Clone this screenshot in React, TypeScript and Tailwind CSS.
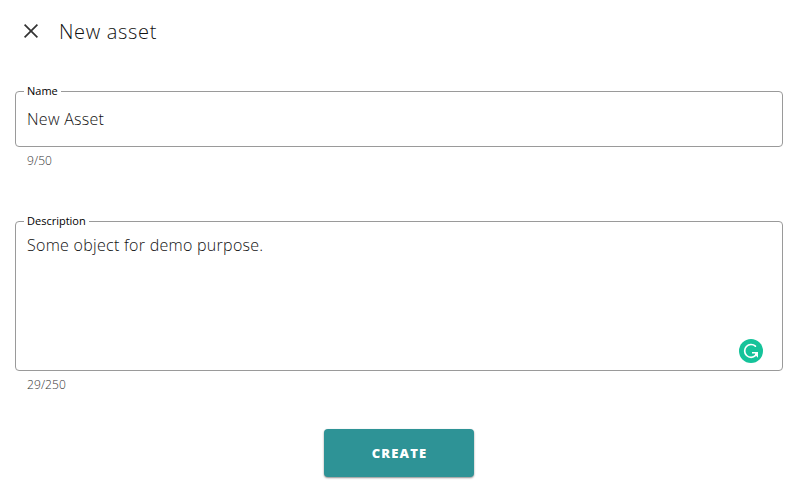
import { useState } from "react";

function CloseIcon() {
  return (
    <svg width="24" height="24" viewBox="0 0 24 24" fill="none" stroke="#333333" strokeWidth="1.7">
      <path d="M5.6 5.6 18.4 18.4M18.4 5.6 5.6 18.4" />
    </svg>
  );
}

function AssistantBadge() {
  return (
    <svg className="absolute right-[19px] bottom-0" width="24" height="24" viewBox="0 0 24 24">
      <circle cx="12" cy="12" r="12" fill="#15c39a" />
      <path d="M16.4 7.2A6.4 6.4 0 1 0 16.6 16.4" fill="none" stroke="#fff" strokeWidth="1.7" strokeLinecap="round" />
      <path d="M13 13H19V18.8L17 16.8 15.8 16.2 16.2 14.6H13Z" fill="#fff" />
    </svg>
  );
}

const fieldText =
  "block w-full resize-none bg-transparent pl-[11px] text-[16px] leading-6 font-light tracking-[0.28px] text-[#111] outline-none";
const frame = "relative rounded border border-[#9a9a9a]";
const legend = "ml-2 h-[11px] px-[3px] text-[11px] leading-[9px] text-black";
const counter = "pl-3 text-[12px] leading-5 font-light tracking-[0.1px] text-[#333]";

export default function App() {
  const [name, setName] = useState("New Asset");
  const [description, setDescription] = useState("Some object for demo purpose.");

  return (
    <form
      className="flex h-[500px] w-[795px] flex-col bg-white pr-3 pl-[15px] font-['Open_Sans',sans-serif]"
      onSubmit={(e) => e.preventDefault()}
    >
      <header className="flex h-[62px] items-center gap-4 pl-1">
        <button type="button" aria-label="Close">
          <CloseIcon />
        </button>
        <h1 className="pt-0.5 text-[20px] leading-8 font-light tracking-[0.68px] text-[#111]">New asset</h1>
      </header>

      <fieldset className={`${frame} mt-6 h-[61px]`}>
        <legend className={legend}>Name</legend>
        <input
          className={`${fieldText} mt-[10px]`}
          spellCheck={false}
          value={name}
          onChange={(e) => setName(e.target.value)}
        />
      </fieldset>
      <p className={`${counter} mt-1`}>{name.length}/50</p>

      <fieldset className={`${frame} mt-[45px] h-[155px]`}>
        <legend className={legend}>Description</legend>
        <textarea
          className={`${fieldText} mt-1.5 h-[130px]`}
          spellCheck={false}
          value={description}
          onChange={(e) => setDescription(e.target.value)}
        />
        <AssistantBadge />
      </fieldset>
      <p className={`${counter} mt-1`}>{description.length}/250</p>

      <button
        type="submit"
        className="mt-[34px] h-12 w-[150px] self-center rounded bg-[#2e9396] pt-0.5 pl-px text-[13px] font-extrabold tracking-[1.15px] text-white shadow-[0_1px_2px_rgba(0,0,0,0.45)]"
      >
        CREATE
      </button>
    </form>
  );
}
